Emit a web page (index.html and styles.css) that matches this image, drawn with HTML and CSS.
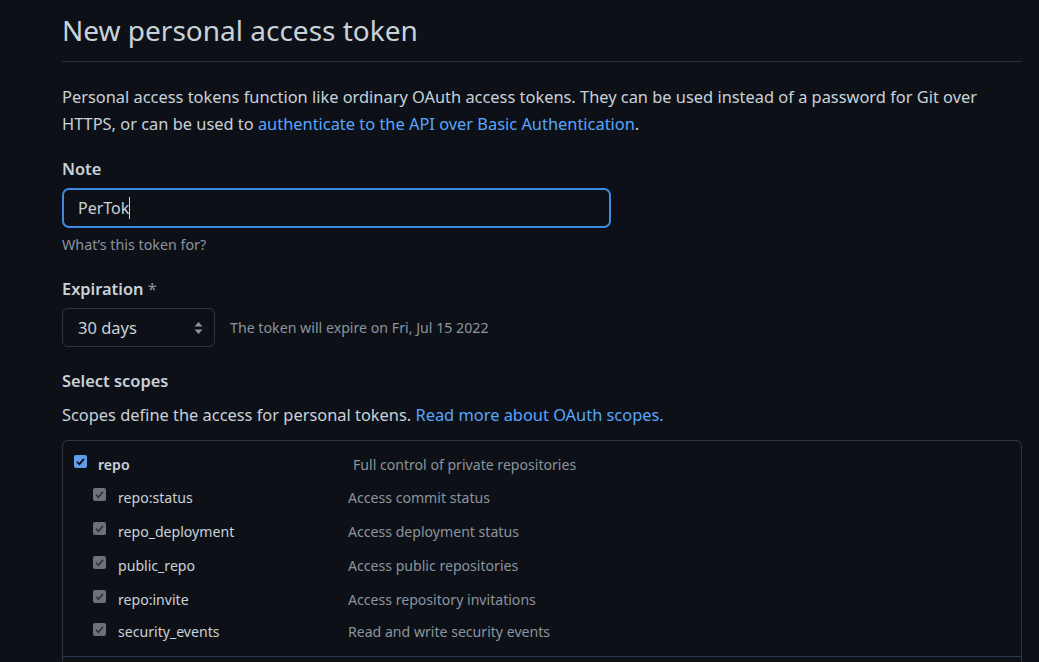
FILE: index.html
```html
<!DOCTYPE html>
<html lang="en">
<head>
<meta charset="utf-8">
<title>New personal access token</title>
<link rel="stylesheet" href="styles.css">
</head>
<body>
<main class="page">
  <div class="subhead">
    <h1 class="subhead-title">New personal access token</h1>
  </div>
  <p class="intro">Personal access tokens function like ordinary OAuth access tokens. They can be used instead of a password for Git over HTTPS, or can be used to <a href="#" class="link">authenticate to the API over Basic Authentication</a>.</p>

  <div class="field note-field">
    <label class="label">Note</label>
    <div class="input focused"><span class="caret-text">PerTok</span></div>
    <p class="note">What’s this token for?</p>
  </div>

  <div class="field expiration-field">
    <label class="label">Expiration <span class="req">*</span></label>
    <div class="expire-row">
      <div class="select">
        <span>30 days</span>
        <svg class="updown" width="9" height="14" viewBox="0 0 9 14"><path d="M4.5 1 L8.5 5.5 H0.5 Z" fill="#8b949e"/><path d="M4.5 13 L8.5 8.5 H0.5 Z" fill="#8b949e"/></svg>
      </div>
      <span class="expire-text">The token will expire on Fri, Jul 15 2022</span>
    </div>
  </div>

  <div class="field scopes-field">
    <label class="label">Select scopes</label>
    <p class="scopes-desc">Scopes define the access for personal tokens. <a href="#" class="link">Read more about OAuth scopes.</a></p>
    <div class="scopes-box">
      <div class="scope-group">
        <div class="scope-row parent">
          <span class="cb cb-on"><svg width="11" height="11" viewBox="0 0 11 11"><path d="M2 5.8 L4.4 8.2 L9 2.8" stroke="#0d1117" stroke-width="1.8" fill="none"/></svg></span>
          <span class="scope-name">repo</span>
          <span class="scope-desc">Full control of private repositories</span>
        </div>
        <div class="scope-row child">
          <span class="cb cb-dis"><svg width="11" height="11" viewBox="0 0 11 11"><path d="M2 5.8 L4.4 8.2 L9 2.8" stroke="#2b3138" stroke-width="1.6" fill="none"/></svg></span>
          <span class="scope-name">repo:status</span>
          <span class="scope-desc">Access commit status</span>
        </div>
        <div class="scope-row child">
          <span class="cb cb-dis"><svg width="11" height="11" viewBox="0 0 11 11"><path d="M2 5.8 L4.4 8.2 L9 2.8" stroke="#2b3138" stroke-width="1.6" fill="none"/></svg></span>
          <span class="scope-name">repo_deployment</span>
          <span class="scope-desc">Access deployment status</span>
        </div>
        <div class="scope-row child">
          <span class="cb cb-dis"><svg width="11" height="11" viewBox="0 0 11 11"><path d="M2 5.8 L4.4 8.2 L9 2.8" stroke="#2b3138" stroke-width="1.6" fill="none"/></svg></span>
          <span class="scope-name">public_repo</span>
          <span class="scope-desc">Access public repositories</span>
        </div>
        <div class="scope-row child">
          <span class="cb cb-dis"><svg width="11" height="11" viewBox="0 0 11 11"><path d="M2 5.8 L4.4 8.2 L9 2.8" stroke="#2b3138" stroke-width="1.6" fill="none"/></svg></span>
          <span class="scope-name">repo:invite</span>
          <span class="scope-desc">Access repository invitations</span>
        </div>
        <div class="scope-row child last">
          <span class="cb cb-dis"><svg width="11" height="11" viewBox="0 0 11 11"><path d="M2 5.8 L4.4 8.2 L9 2.8" stroke="#2b3138" stroke-width="1.6" fill="none"/></svg></span>
          <span class="scope-name">security_events</span>
          <span class="scope-desc">Read and write security events</span>
        </div>
      </div>
      <div class="scope-rest"></div>
    </div>
  </div>
</main>
</body>
</html>
```

FILE: styles.css
```css
html, body {
  margin: 0;
  padding: 0;
  background: #0d1117;
  height: 100%;
  overflow: hidden;
}
body {
  font-family: "Noto Sans", "Open Sans", sans-serif;
  color: #c9d1d9;
  font-size: 16.4px;
}
.page {
  width: 960px;
  padding-left: 62px;
}
.subhead {
  padding-top: 9px;
  padding-bottom: 10px;
  border-bottom: 1px solid #2f2b30;
}
.subhead-title {
  margin: 0;
  font-size: 28px;
  font-weight: 400;
  line-height: 42px;
  color: #c9d1d9;
}
.intro {
  margin: 21px 0 0;
  line-height: 27px;
}
.link {
  color: #58a6ff;
  text-decoration: none;
}
.field {
  margin-top: 19px;
}
.note-field {
  margin-top: 20px;
}
.label {
  display: block;
  font-weight: 600;
  line-height: 24px;
}
.req {
  color: #8b949e;
  font-weight: 400;
}
.input {
  margin-top: 7px;
  height: 36px;
  border: 2px solid #3b8ce0;
  border-radius: 7px;
  display: flex;
  align-items: center;
  padding-left: 14px;
  font-size: 16px;
  box-sizing: content-box;
  width: 531px;
}
.caret-text {
  border-right: 1px solid #c9d1d9;
  line-height: 22px;
}
.note {
  margin: 7px 0 0;
  font-size: 14.3px;
  line-height: 20px;
  color: #8b949e;
}
.expiration-field {
  margin-top: 22px;
}
.expire-row {
  margin-top: 7px;
  display: flex;
  align-items: center;
}
.select {
  border: 1px solid #30363d;
  border-radius: 6px;
  display: flex;
  align-items: center;
  justify-content: space-between;
  padding: 0 11px 0 15px;
  box-sizing: border-box;
  width: 153px;
  height: 39px;
  font-size: 16.5px;
}
.expire-text {
  margin-left: 15px;
  font-size: 14.2px;
  color: #8b949e;
}
.scopes-field {
  margin-top: 22px;
}
.scopes-desc {
  margin: 8px 0 0;
  line-height: 27px;
}
.scopes-box {
  margin-top: 12px;
  border: 1px solid #30363d;
  border-radius: 6px;
}
.scope-group {
  padding: 7px 0 6px;
  border-bottom: 1px solid #283a50;
}
.scope-rest {
  height: 60px;
}
.scope-row {
  display: flex;
  align-items: center;
  height: 34px;
  font-size: 14.1px;
}
.scope-row.parent {
  padding-left: 11px;
  height: 32px;
}
.scope-row.child {
  padding-left: 30px;
}
.scope-row.last {
  height: 32px;
  padding-bottom: 2px;
  align-items: flex-start;
  padding-top: 0;
}
.scope-row.last .scope-name,
.scope-row.last .scope-desc {
  line-height: 32px;
}
.scope-row.last .cb {
  margin-top: 7px;
}
.cb {
  width: 13px;
  height: 13px;
  border-radius: 2px;
  display: flex;
  align-items: center;
  justify-content: center;
  flex: none;
  margin-top: -5px;
}
.cb-on {
  background: #5f9de6;
}
.cb-dis {
  background: #6b7279;
}
.scope-name {
  margin-left: 11px;
}
.parent .scope-name {
  font-weight: 600;
  width: 255px;
}
.child .scope-name {
  width: 230px;
  margin-left: 12px;
}
.scope-desc {
  color: #8b949e;
}
```
